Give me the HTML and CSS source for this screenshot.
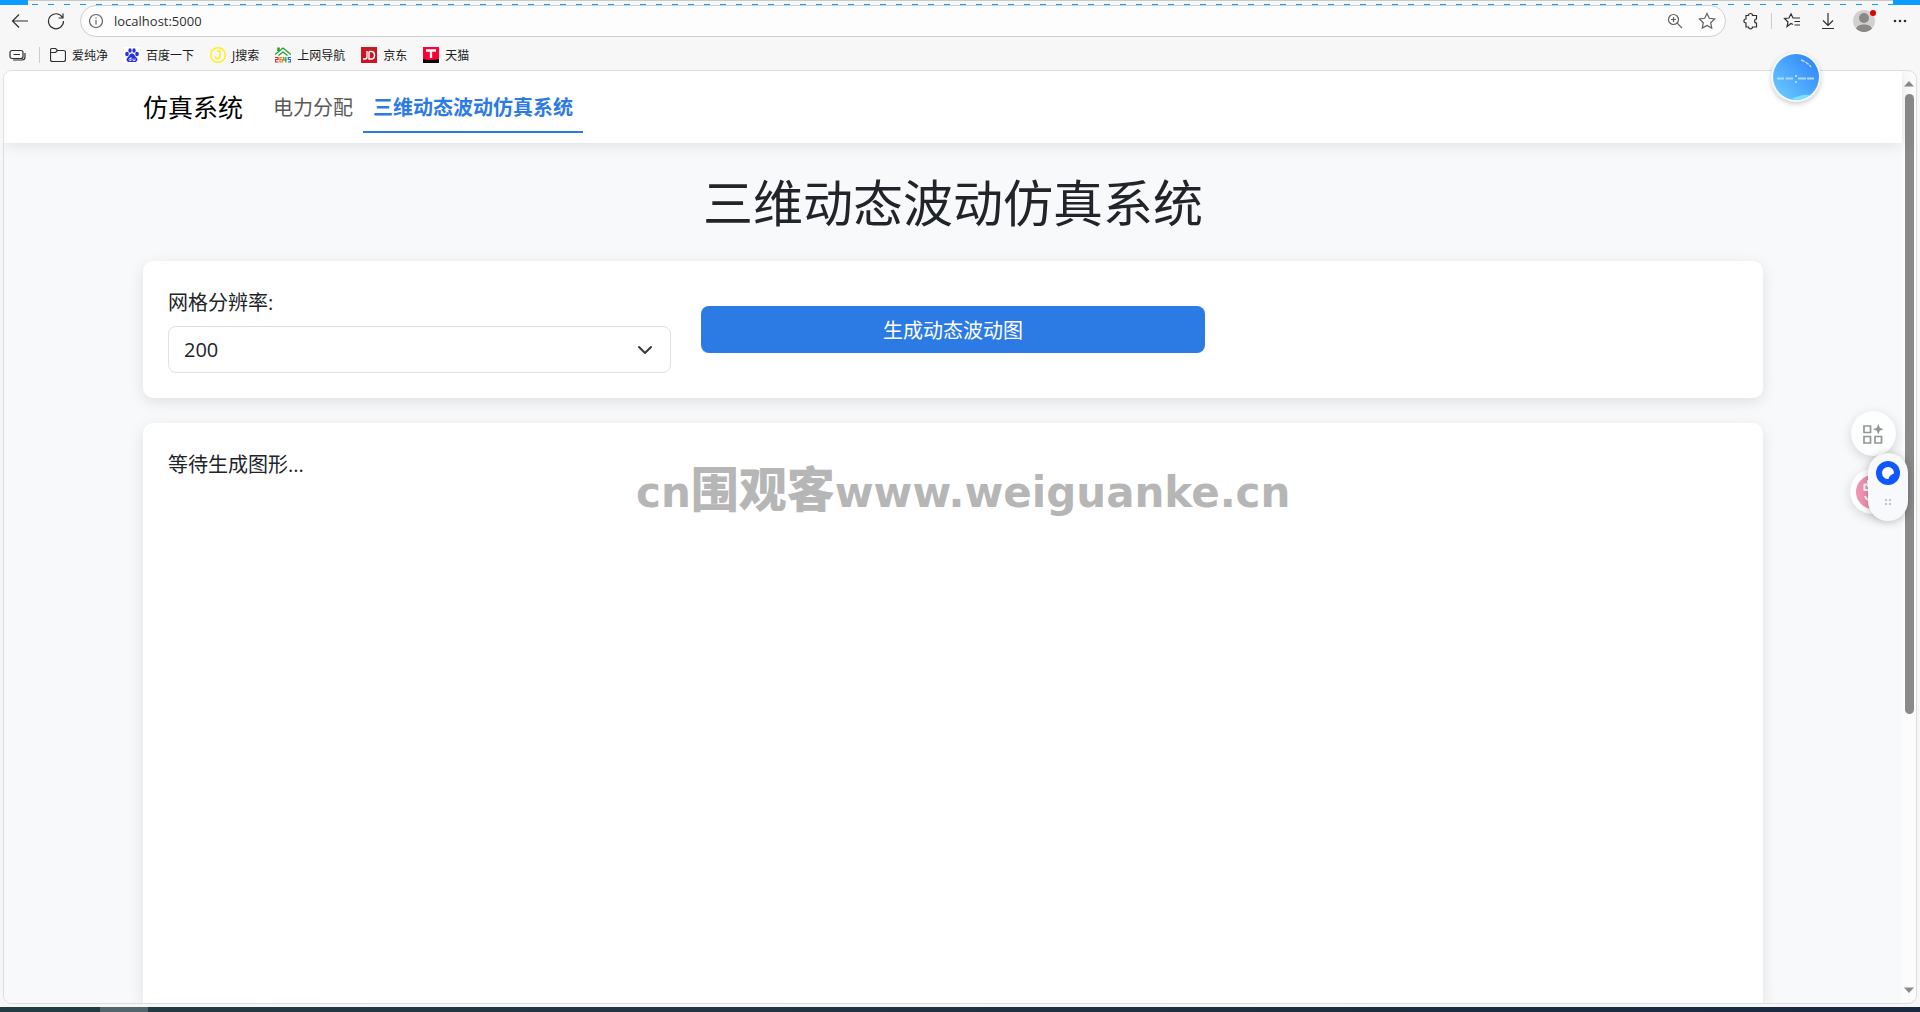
FILE: index.html
```html
<!DOCTYPE html>
<html lang="zh-CN">

<head>
    <meta charset="UTF-8">
    <meta name="viewport" content="width=device-width, initial-scale=1.0">
    <title>三维动态波动仿真系统</title>
    <link rel="stylesheet" href="styles.css">
</head>

<body>
    <!-- Browser bar -->
    <div class="capture-edge"></div>
    <header class="browser">
        <div class="toolbar">
            <button class="icon-btn back" aria-label="返回">
                <svg width="18" height="18" viewBox="0 0 18 18"><path d="M17 9H1.500M8 2.500L1.500 9L8 15.500"/></svg>
            </button>
            <button class="icon-btn reload" aria-label="刷新">
                <svg width="18" height="18" viewBox="0 0 18 18"><path d="M15.500 5.500A7.500 7.500 0 1 0 16.500 9M16 1.500V6H11.500"/></svg>
            </button>
            <div class="address">
                <svg width="16" height="16" viewBox="0 0 16 16"><circle cx="8" cy="8" r="6.500"/><path d="M8 7V11.500M8 4.500V5.800"/></svg>
                <input class="url" type="text" value="localhost:5000" aria-label="地址">
                <button class="icon-btn muted" aria-label="缩放">
                    <svg width="16" height="16" viewBox="0 0 16 16"><circle cx="6.500" cy="6.500" r="5"/><path d="M10.200 10.200L15 15M6.500 4V9M4 6.500H9"/></svg>
                </button>
                <button class="icon-btn muted" aria-label="收藏">
                    <svg width="18" height="18" viewBox="0 0 18 18"><path d="M9 1.500L11.300 6.300L16.600 7L12.700 10.700L13.700 16L9 13.400L4.300 16L5.300 10.700L1.400 7L6.700 6.300Z"/></svg>
                </button>
            </div>
            <div class="tools">
                <button class="icon-btn" aria-label="扩展">
                    <svg width="18" height="18" viewBox="0 0 18 18"><path d="M4 3.500H6.500C6.500 .8 10.500 .8 10.500 3.500H14.500V7C12 7 12 11 14.500 11V15H10.500C10.500 17.500 6.500 17.500 6.500 15H4V11C1.200 11 1.200 7 4 7Z"/></svg>
                </button>
                <span class="divider"></span>
                <button class="icon-btn" aria-label="收藏夹">
                    <svg width="18" height="18" viewBox="0 0 18 18"><path d="M10 12.500L8 11.500L4 14.500L5 10L1.500 6.500L6 6L8 1.800L10 6H17M11.500 9.500H17M11.500 13H17"/></svg>
                </button>
                <button class="icon-btn download" aria-label="下载">
                    <svg width="18" height="18" viewBox="0 0 18 18"><path d="M9 1V13M4 8.500L9 13.500L14 8.500M3 16.500H15"/></svg>
                </button>
                <button class="icon-btn" aria-label="个人资料">
                    <svg class="avatar" width="24" height="24" viewBox="0 0 24 24">
                        <circle cx="12" cy="12" r="11" fill="#d2d0ce"/>
                        <circle cx="12" cy="9" r="5" fill="#8a8886"/>
                        <path d="M4 19.500C6 14 18 14 20 19.500C16 24 8 24 4 19.500Z" fill="#8a8886"/>
                        <circle cx="21" cy="4" r="3" fill="#e00000"/>
                    </svg>
                </button>
                <button class="icon-btn" aria-label="更多">
                    <svg class="more" width="18" height="18" viewBox="0 0 18 18"><circle cx="4" cy="9" r="1.300"/><circle cx="9" cy="9" r="1.300"/><circle cx="14" cy="9" r="1.300"/></svg>
                </button>
            </div>
        </div>
        <nav class="bookmarks">
            <svg width="18" height="16" viewBox="0 0 18 16"><rect x="1" y="3.500" width="13" height="8" rx="2"/><path d="M4.500 7.500H11M4 13H13Q16 13 16 10V6"/></svg>
            <span class="divider"></span>
            <a href="#"><svg width="16" height="16" viewBox="0 0 16 16"><path d="M.5 3Q.5 1.500 2 1.500H5.500L7.500 3.500H13.500Q15.500 3.500 15.500 5.500V12.500Q15.500 14.500 13.500 14.500H2.500Q.5 14.500 .5 12.500ZM.5 5.500H5.500L7.500 3.500"/></svg>爱纯净</a>
            <a href="#"><svg width="16" height="16" viewBox="0 0 16 16" class="solid"><rect width="16" height="16" fill="#fff"/><g fill="#2932e1"><ellipse cx="3" cy="7" rx="1.800" ry="2.200"/><ellipse cx="6" cy="3.500" rx="1.700" ry="2.300"/><ellipse cx="10" cy="3.500" rx="1.700" ry="2.300"/><ellipse cx="13" cy="7" rx="1.800" ry="2.200"/><path d="M8 6.500C10.500 6.500 10.500 9 12.500 10.500C14.500 12.500 13 15.500 10.500 15H5.500C3 15.500 1.500 12.500 3.500 10.500C5.500 9 5.500 6.500 8 6.500Z"/></g><path d="M7 10V13.500H5.500Q4.500 12.500 5.500 11.500H7M9 11.500V13.500H11V11.500" stroke="#fff" fill="none" stroke-width=".8"/></svg>百度一下</a>
            <a href="#"><svg class="search-logo" width="16" height="16" viewBox="0 0 16 16"><circle cx="8" cy="8" r="7.300"/><path d="M7 4H10V9Q10 11.500 7.500 11.500Q5.500 11.500 5 9.500"/></svg>J搜索</a>
            <a href="#"><svg width="16" height="16" viewBox="0 0 16 16"><path d="M0 7.500L8 1L16 7.500M3.500 8.500L8 5L12.500 8.500" stroke="#229b22"/><path d="M3.500 4V.5" stroke="#12a812" stroke-width="2.500"/><path d="M0 10.500H3V12.500H.5V15H3.500" stroke="#e22222"/><path d="M7.500 10.500H5V15H7.500V12.500H5" stroke="#f08020"/><path d="M8.800 10V13H11.800M10.800 10V15.500" stroke="#28a038"/><path d="M16 10.500H13.300V12.500H15.500V15H13" stroke="#2468d8"/></svg>上网导航</a>
            <a href="#"><svg width="16" height="16" viewBox="0 0 16 16" class="solid"><rect width="16" height="16" fill="#c91623"/><path d="M6 4V10Q6 12 4 12H2M8 4.500V12H10Q13.500 12 13.500 8.200Q13.500 4.500 10 4.500H8" stroke="#fff" stroke-width="1.400" fill="none"/></svg>京东</a>
            <a href="#"><svg width="16" height="16" viewBox="0 0 16 16" class="solid"><rect width="16" height="16" fill="#ff0036"/><path d="M0 16V12Q8 14 16 12V16Z" fill="#000"/><path d="M3 3.500H13M8 3.500V11" stroke="#fff" stroke-width="2.300"/></svg>天猫</a>
        </nav>
    </header>

    <!-- Page -->
    <div class="window">
        <div class="page">
            <nav class="navbar">
                <div class="container nav-inner">
                    <a class="brand" href="#">仿真系统</a>
                    <a class="nav-link" href="#">电力分配</a>
                    <a class="nav-link active" href="#">三维动态波动仿真系统</a>
                </div>
            </nav>
            <main class="container">
                <h1>三维动态波动仿真系统</h1>
                <form class="card controls">
                    <div class="field">
                        <label for="resolution">网格分辨率:</label>
                        <select id="resolution" name="resolution">
                            <option>50</option>
                            <option>100</option>
                            <option selected>200</option>
                        </select>
                    </div>
                    <button class="generate" type="button">生成动态波动图</button>
                </form>
                <section class="card plot">等待生成图形...</section>
            </main>
        </div>
        <div class="scrollbar">
            <svg width="10" height="6" viewBox="0 0 10 6"><path d="M0 5.500L5 0L10 5.500Z"/></svg>
            <div class="track"><div class="thumb"></div></div>
            <svg width="10" height="6" viewBox="0 0 10 6"><path d="M0 .5L5 6L10 .5Z"/></svg>
        </div>
    </div>
    <footer class="taskbar"><span class="task"></span></footer>

    <!-- Floating items -->
    <div class="watermark">cn<span>围观客</span>www.weiguanke.cn</div>
    <button class="clock" aria-label="时钟">
        <svg width="46" height="46" viewBox="0 0 46 46">
            <defs><linearGradient id="sky" x1="0" y1="1" x2="1" y2="0"><stop offset="0" stop-color="#6fd0ff"/><stop offset="1" stop-color="#2b7dfb"/></linearGradient></defs>
            <circle cx="23" cy="23" r="23" fill="url(#sky)"/>
            <path d="M18 45.500Q28 40 37 41Q31 46 23 46Z" fill="#7be0ff"/>
            <path d="M28 6Q34 8 38 13" stroke="#b4dcff" stroke-width="1.500" stroke-dasharray="4 1" fill="none"/>
            <path d="M4 24.500H11M12.500 24.500H20M25 24.500H33M34 24.500H41" stroke="#a9d8ff" stroke-width="2"/>
            <path d="M22 21H24V23H22ZM22 27H24V29H22Z" fill="#a9d8ff"/>
        </svg>
    </button>
    <button class="float-btn apps" aria-label="应用">
        <svg width="21" height="20" viewBox="0 0 21 20"><path d="M1 2H7.500V8.500H1ZM1 12.500H7.500V19H1ZM12 12.500H18.500V19H12Z" fill="none" stroke="#949694" stroke-width="1.700"/><path d="M15.300 0L16.800 3.700L20.500 5.200L16.800 6.700L15.300 10.500L13.800 6.700L10 5.200L13.800 3.700Z" fill="#949694"/></svg>
    </button>
    <button class="float-btn pink" aria-label="助手">
        <svg width="34" height="34" viewBox="0 0 34 34"><circle cx="17" cy="17" r="17" fill="#f093b0"/><path d="M8 9.500H14M8.500 9V15H14M12 5V12M9 21Q10 25 14 25" stroke="#fff" stroke-width="2" fill="none"/></svg>
    </button>
    <button class="assistant" aria-label="侧边助手">
        <svg width="24" height="24" viewBox="0 0 24 24"><circle cx="12" cy="12" r="12" fill="#0f57ff"/><path d="M18 12.500A6 6 0 1 0 12.500 18Q13 14 18 12.500Z" fill="#fff"/></svg>
        <svg width="6" height="6" viewBox="0 0 6 6"><path d="M0 0H2V2H0ZM4 0H6V2H4ZM0 4H2V6H0ZM4 4H6V6H4Z" fill="#bfc1c4"/></svg>
    </button>
</body>

</html>
```

FILE: styles.css
```css
* {
    box-sizing: border-box;
}

body {
    display: flex;
    flex-direction: column;
    height: 100vh;
    margin: 0;
    overflow: hidden;
    background-color: #f7f7f7;
    color: #212529;
    font-family: "Open Sans", "Noto Sans CJK SC", sans-serif;
}

button {
    border: none;
    cursor: pointer;
}

a {
    color: inherit;
    text-decoration: none;
}

/* Browser bar */
.capture-edge {
    flex: none;
    height: 5px;
    background:
        linear-gradient(#0a9dff, #0a9dff) left top / 28px 5px no-repeat,
        linear-gradient(#0a9dff, #0a9dff) right top / 27px 5px no-repeat,
        linear-gradient(#c8c8c8, #c8c8c8) left top / 100% 1px no-repeat,
        repeating-linear-gradient(90deg, #0a9dff 0 6px, transparent 6px 16px) 0 4px / 100% 1px no-repeat;
}

.browser {
    flex: none;
    height: 65px;
}

.browser svg {
    flex: none;
    display: block;
    fill: none;
    stroke: #303030;
    stroke-width: 1.2;
}

.browser svg.avatar,
.browser svg.solid {
    stroke: none;
}

.browser svg.more {
    fill: #303030;
    stroke: none;
}

.browser svg.search-logo {
    stroke: #ffee20;
    stroke-width: 1.5;
}

.toolbar {
    display: flex;
    align-items: center;
    height: 32px;
    padding: 0 11px;
}

.icon-btn {
    flex: none;
    padding: 0;
    background: none;
}

.reload {
    margin: 0 15px 0 18px;
}

.address {
    flex: 1;
    display: flex;
    align-items: center;
    gap: 10px;
    height: 32px;
    padding: 0 9px 0 7px;
    border: 1px solid #cfcfcf;
    border-radius: 16px;
    background-color: #fdfdfd;
}

.address svg,
.browser .muted svg {
    stroke: #606060;
}

.url {
    flex: 1;
    min-width: 0;
    padding: 0;
    border: none;
    outline: none;
    background: none;
    color: #303030;
    font: 13px "Open Sans", sans-serif;
}

.muted {
    margin-left: 5px;
}

.tools {
    display: flex;
    align-items: center;
    gap: 15px;
    padding-left: 16px;
}

.download {
    margin-left: 3px;
}

.divider {
    width: 1px;
    height: 16px;
    background-color: #cccccc;
}

.tools .divider {
    margin: 0 -4px;
}

.bookmarks {
    display: flex;
    align-items: center;
    gap: 16px;
    height: 33px;
    padding: 2px 9px 0;
    color: #202020;
    font-size: 12px;
}

.bookmarks .divider {
    margin: 0 -6px 0 -4px;
}

.bookmarks a {
    display: flex;
    align-items: center;
    gap: 6px;
}

/* Page */
.window {
    flex: 1;
    display: flex;
    min-height: 0;
    margin: 0 3px 3px;
    overflow: hidden;
    border: 1px solid #dddddd;
    border-radius: 9px;
    background-color: #fcfcfc;
}

.page {
    flex: 1;
    display: flex;
    flex-direction: column;
    background-color: #f8f9fb;
    font-size: 20px;
    line-height: 30px;
}

.container {
    width: 100%;
    max-width: 1650px;
    margin: 0 auto;
    padding: 0 15px;
}

.navbar {
    position: relative;
    padding: 10px 0;
    background-color: #ffffff;
    box-shadow: 0 2px 15px rgba(0, 0, 0, 0.1);
}

.nav-inner {
    display: flex;
    align-items: center;
}

.brand {
    margin-right: 20px;
    color: #000000;
    font-size: 25px;
}

.nav-link {
    padding: 12px 10px 8px;
    border-bottom: 2px solid transparent;
    color: #595959;
}

.nav-link.active {
    border-bottom-color: #2c7be5;
    color: #2c7be5;
    font-weight: bold;
}

main.container {
    flex: 1;
    display: flex;
    flex-direction: column;
    min-height: 0;
}

h1 {
    margin: 30px 0 28px;
    font-size: 50px;
    font-weight: normal;
    line-height: 60px;
    text-align: center;
}

.card {
    padding: 25px;
    border-radius: 10px;
    background-color: #ffffff;
    box-shadow: 0 4px 15px rgba(0, 0, 0, 0.1);
}

.controls {
    display: grid;
    grid-template-columns: repeat(3, 1fr);
    align-items: center;
    gap: 30px;
    margin-bottom: 25px;
}

.field {
    display: flex;
    flex-direction: column;
    gap: 8px;
}

.field label {
    padding-top: 2px;
}

select {
    appearance: none;
    height: 47px;
    padding: 0 15px;
    border: 1px solid #dee2e6;
    border-radius: 8px;
    background: #ffffff url("data:image/svg+xml,%3Csvg xmlns='http://www.w3.org/2000/svg' viewBox='0 0 16 16'%3E%3Cpath fill='none' stroke='%23343a40' stroke-linecap='round' stroke-linejoin='round' stroke-width='2' d='m2 5 6 6 6-6'/%3E%3C/svg%3E") right 17px center / 16px 16px no-repeat;
    color: #212529;
    font-family: inherit;
    font-size: 20px;
}

.generate {
    height: 47px;
    border-radius: 8px;
    background-color: #2c7be5;
    color: #ffffff;
    font-family: inherit;
    font-size: 20px;
}

.plot {
    flex: 1;
    padding-top: 27px;
    border-radius: 10px 10px 0 0;
}

.scrollbar {
    flex: none;
    display: flex;
    flex-direction: column;
    align-items: center;
    gap: 7px;
    width: 14px;
    padding: 10px 0;
    fill: #8a8a8a;
}

.track {
    flex: 1;
    width: 9px;
}

.thumb {
    height: 70%;
    border-radius: 5px;
    background-color: #8a8a8a;
}

.taskbar {
    flex: none;
    height: 5px;
    padding-left: 100px;
    background: linear-gradient(90deg, #233b42, #1a2840);
}

.task {
    display: block;
    width: 48px;
    height: 5px;
    background-color: #52656c;
}

/* Floating items */
.watermark {
    position: absolute;
    top: 460px;
    left: 636px;
    color: #b6b6b6;
    font: bold 42px/60px "DejaVu Sans", "Noto Sans CJK SC", sans-serif;
    white-space: nowrap;
    pointer-events: none;
}

.watermark span {
    font-size: 48px;
    font-weight: 900;
}

.clock {
    position: absolute;
    top: 52px;
    right: 99px;
    width: 50px;
    height: 50px;
    padding: 2px;
    border-radius: 50%;
    background-color: #f4faff;
    box-shadow: 0 2px 5px rgba(0, 0, 0, 0.2);
}

.clock svg {
    display: block;
}

.float-btn {
    position: absolute;
    display: flex;
    align-items: center;
    justify-content: center;
    width: 45px;
    height: 45px;
    padding: 0;
    border-radius: 50%;
    background-color: #fdfefe;
    box-shadow: 0 3px 12px rgba(0, 0, 0, 0.15);
}

.apps {
    top: 411px;
    right: 24px;
}

.pink {
    top: 469px;
    right: 25px;
}

.assistant {
    position: absolute;
    top: 453px;
    right: 12px;
    display: flex;
    flex-direction: column;
    align-items: center;
    gap: 14px;
    width: 40px;
    height: 68px;
    padding: 8px 0;
    border-radius: 20px;
    background-color: #f8f9fc;
    box-shadow: 0 1px 8px rgba(0, 0, 0, 0.25);
}
```
